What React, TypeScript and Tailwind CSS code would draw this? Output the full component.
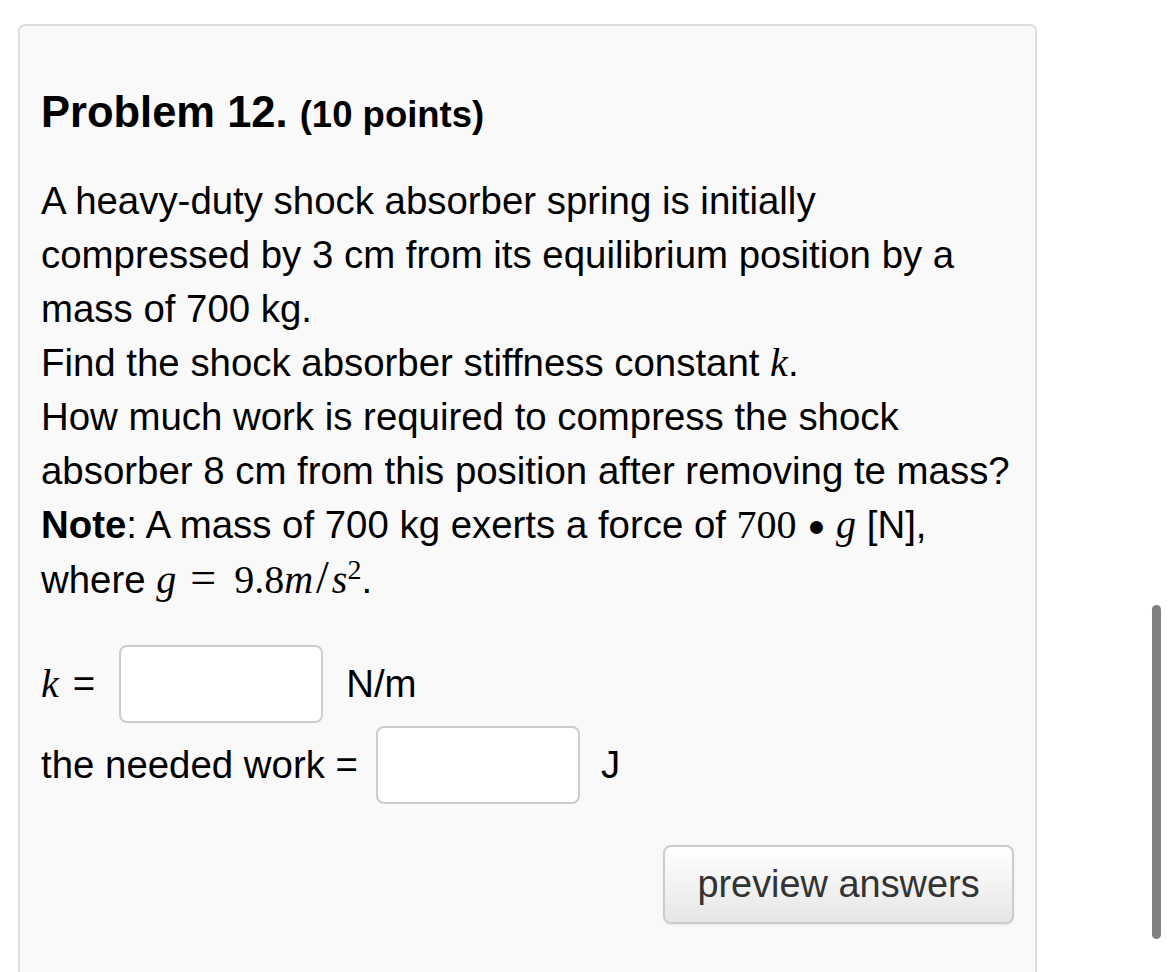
import React from 'react';

const sans = { fontFamily: '"Liberation Sans", Arial, sans-serif' };
const serif = { fontFamily: '"Liberation Serif", "Times New Roman", serif' };

const Var = ({ children }: { children: React.ReactNode }) => (
  <span className="italic text-[40px]" style={serif}>
    {children}
  </span>
);

const Num = ({ children }: { children: React.ReactNode }) => (
  <span className="text-[40px]" style={serif}>
    {children}
  </span>
);

const App = () => {
  return (
    <div className="relative h-[972px] overflow-hidden bg-white pt-[24px] pl-[18px]" style={sans}>
      <div className="w-[1019px] h-[960px] rounded-t-[7px] border-2 border-b-0 border-[#dedede] bg-[#f9f9f9] px-[21px] pt-[61px] text-black">
        <h3 className="text-[43.5px] leading-[50px] font-bold whitespace-nowrap">
          Problem 12. <span className="text-[36.5px]">(10 points)</span>
        </h3>

        <div className="mt-[34px] text-[38.4px] leading-[54px] whitespace-nowrap">
          <div>A heavy-duty shock absorber spring is initially</div>
          <div>compressed by 3 cm from its equilibrium position by a</div>
          <div>mass of 700 kg.</div>
          <div>
            Find the shock absorber stiffness constant <Var>k</Var>.
          </div>
          <div>How much work is required to compress the shock</div>
          <div>absorber 8 cm from this position after removing te mass?</div>
          <div>
            <span className="font-bold">Note</span>: A mass of 700 kg exerts a force of <Num>700</Num>{' '}
            <span className="text-[30px] align-[2px]">●</span> <Var>g</Var> [N],
          </div>
          <div>
            where <Var>g</Var>
            <span className="ml-[14px] mr-[18px] text-[46px] leading-[40px]" style={serif}>
              =
            </span>
            <Num>9.8</Num>
            <Var>m</Var>
            <span className="mx-[3px] text-[46px] leading-[40px]" style={serif}>
              /
            </span>
            <Var>s</Var>
            <sup className="text-[28px] top-[-14px]" style={serif}>
              2
            </sup>
            .
          </div>
        </div>

        <div className="mt-[36px] text-[38.4px]">
          <div className="flex h-[81px] items-center">
            <Var>k</Var>
            <span className="ml-[14px]">=</span>
            <input className="ml-[24px] h-[78px] w-[204px] rounded-[8px] border-2 border-[#cccccc] bg-white" />
            <span className="ml-[23px]">N/m</span>
          </div>
          <div className="flex h-[81px] items-center">
            <span>the needed work =</span>
            <input className="ml-[18px] h-[78px] w-[204px] rounded-[8px] border-2 border-[#cccccc] bg-white" />
            <span className="ml-[21px]">J</span>
          </div>
        </div>

        <div className="mt-[40px] flex justify-end">
          <button className="h-[79px] w-[351px] rounded-[8px] border-2 border-[#cccccc] bg-gradient-to-b from-white to-[#e6e6e6] text-[37.9px] text-[#333333] shadow-[0_1px_2px_rgba(0,0,0,0.08)]">
            preview answers
          </button>
        </div>
      </div>

      <div className="absolute left-[1152px] top-[605px] h-[334px] w-[9px] rounded-full bg-[#808080]" />
    </div>
  );
};

export default App;
